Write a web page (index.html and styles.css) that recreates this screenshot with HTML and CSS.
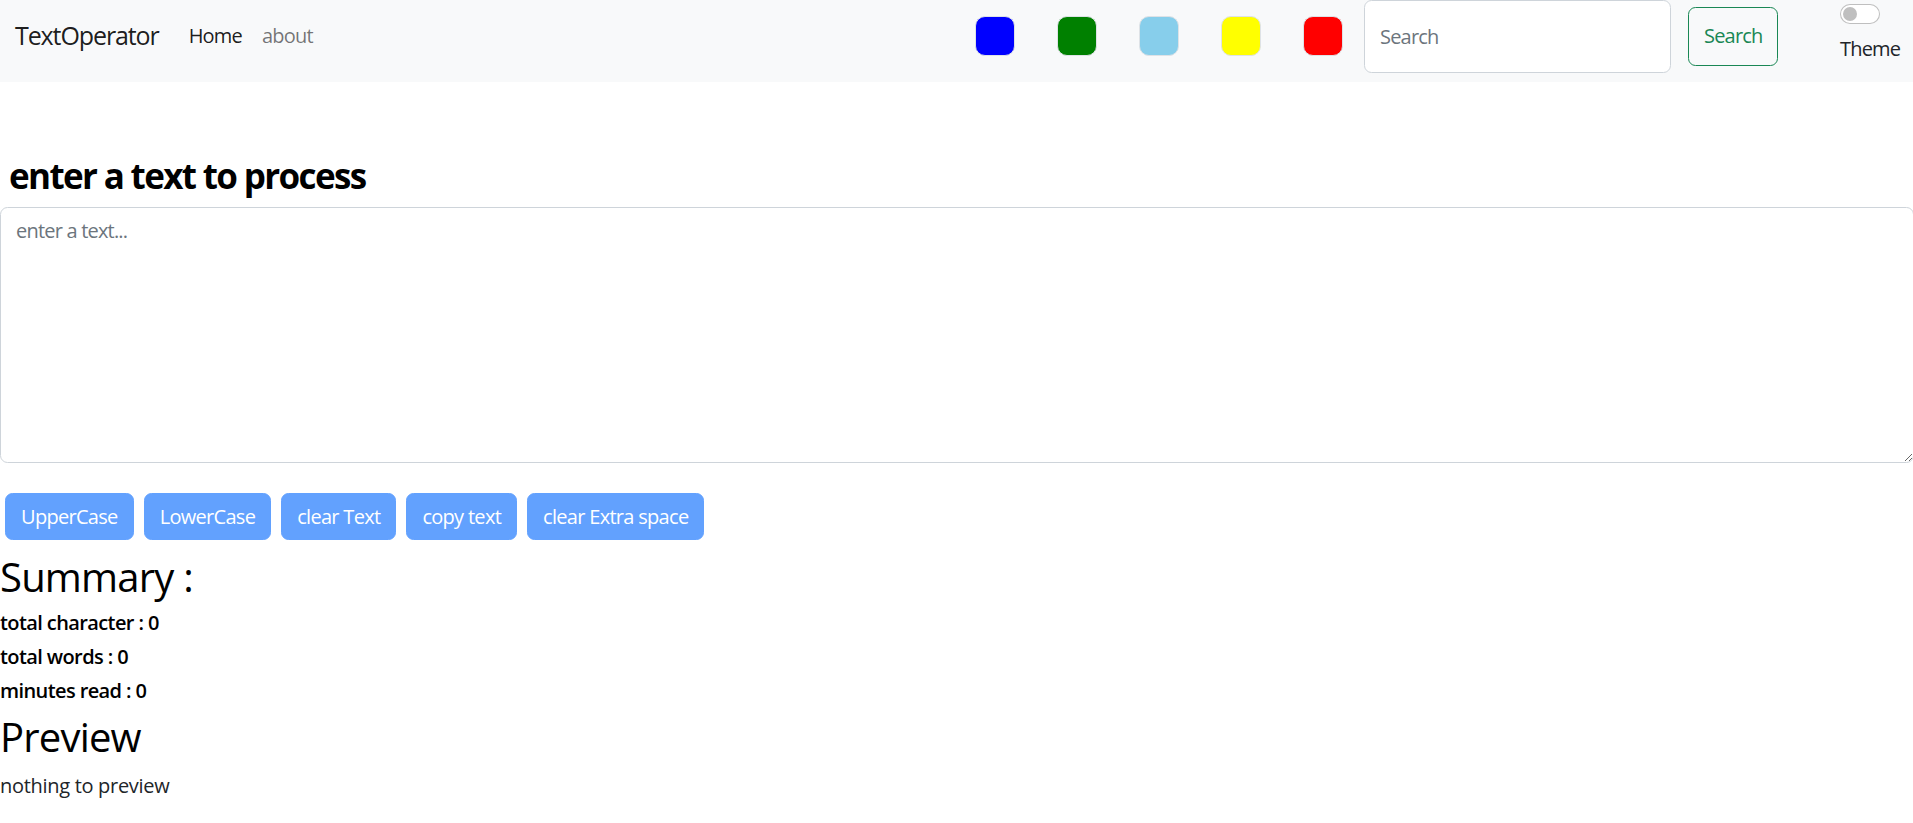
FILE: index.html
```html
<!DOCTYPE html>
<html lang="en">
<head>
<meta charset="utf-8">
<title>TextOperator</title>
<link rel="stylesheet" href="styles.css">
</head>
<body>
<nav class="navbar">
  <a class="brand" href="#">TextOperator</a>
  <ul class="nav-links">
    <li><a class="nav-link active" href="#">Home</a></li>
    <li><a class="nav-link muted" href="#">about</a></li>
  </ul>
  <div class="nav-right">
    <div class="swatches">
      <span class="swatch swatch-blue"></span>
      <span class="swatch swatch-green"></span>
      <span class="swatch swatch-sky"></span>
      <span class="swatch swatch-yellow"></span>
      <span class="swatch swatch-red"></span>
    </div>
    <form class="search">
      <input class="search-input" type="search" placeholder="Search">
      <button class="search-btn" type="button">Search</button>
    </form>
    <div class="theme-switch">
      <span class="switch"><span class="knob"></span></span>
      <label class="switch-label">Theme</label>
    </div>
  </div>
</nav>
<main class="content">
  <h3 class="title">enter a text to process</h3>
  <textarea class="text-input" placeholder="enter a text..."></textarea>
  <div class="actions">
    <button class="btn" type="button">UpperCase</button>
    <button class="btn" type="button">LowerCase</button>
    <button class="btn" type="button">clear Text</button>
    <button class="btn" type="button">copy text</button>
    <button class="btn" type="button">clear Extra space</button>
  </div>
  <h2 class="section-title">Summary :</h2>
  <h6 class="stat">total character : 0</h6>
  <h6 class="stat">total words : 0</h6>
  <h6 class="stat">minutes read : 0</h6>
  <h2 class="section-title">Preview</h2>
  <p class="preview">nothing to preview</p>
</main>
</body>
</html>
```

FILE: styles.css
```css
html { font-size: 20px; }
body {
  margin: 0;
  font-family: "Open Sans", "Noto Sans", sans-serif;
  font-size: 20px;
  line-height: 1.5;
  color: #212529;
  background: #fff;
  overflow: hidden;
}

/* navbar */
.navbar {
  box-sizing: border-box;
  height: 82px;
  background: #f8f9fa;
  display: flex;
  align-items: center;
  padding: 0 14px 10px 15px;
}
.brand {
  font-size: 25px;
  line-height: 1.5;
  letter-spacing: -0.044em;
  color: rgba(0,0,0,.9);
  text-decoration: none;
  margin-right: 20px;
}
.nav-links {
  list-style: none;
  display: flex;
  margin: 0;
  padding: 0;
}
.nav-link {
  display: block;
  padding: 10px 10px;
  letter-spacing: -0.04em;
  text-decoration: none;
  color: rgba(0,0,0,.55);
}
.nav-link.active { color: rgba(0,0,0,.9); }
.nav-right {
  margin-left: auto;
  display: flex;
  align-items: center;
}
.swatches {
  display: flex;
  gap: 42px;
  margin-right: 21px;
}
.swatch {
  box-sizing: border-box;
  width: 40px;
  height: 40px;
  border-radius: 10px;
  border: 1px solid #dee2e6;
}
.swatch-blue { background: #0000ff; }
.swatch-green { background: #008000; }
.swatch-sky { background: #87ceeb; }
.swatch-yellow { background: #ffff00; }
.swatch-red { background: #ff0000; }

.search {
  display: flex;
  align-items: center;
  gap: 17px;
  margin: 0;
}
.search-input {
  box-sizing: border-box;
  width: 307px;
  height: 73px;
  padding: 7.5px 15px;
  font: inherit;
  letter-spacing: -0.04em;
  color: #212529;
  background: #fff;
  border: 1px solid #ced4da;
  border-radius: 7.5px;
  outline: none;
}
.search-input::placeholder { color: #6c757d; }
.search-btn {
  box-sizing: border-box;
  width: 90px;
  height: 59px;
  padding: 7.5px 15px;
  font: inherit;
  letter-spacing: -0.04em;
  color: #198754;
  background: transparent;
  border: 1px solid #198754;
  border-radius: 7.5px;
}
.theme-switch {
  align-self: flex-start;
  display: flex;
  flex-direction: column;
  margin-left: 62px;
  width: 59px;
}
.switch {
  box-sizing: border-box;
  display: flex;
  align-items: center;
  width: 40px;
  height: 20px;
  margin-top: 4px;
  padding-left: 2px;
  border: 1px solid rgba(0,0,0,.25);
  border-radius: 10px;
  background: #fff;
}
.knob {
  width: 14px;
  height: 14px;
  border-radius: 50%;
  background: #bfbfbf;
}
.switch-label {
  margin-top: 10px;
  letter-spacing: -0.04em;
  color: #212529;
}

/* content */
.content { padding: 0; }
.title {
  margin: 73px 0 10px;
  padding-left: 9px;
  font-size: 35px;
  line-height: 1.2;
  font-weight: 700;
  letter-spacing: -0.047em;
  color: #000;
}
.text-input {
  box-sizing: border-box;
  display: block;
  width: calc(100% + 1px);
  height: 256px;
  margin: 0;
  padding: 7.5px 15px;
  font: inherit;
  letter-spacing: -0.04em;
  color: #212529;
  background: #fff;
  border: 1px solid #ced4da;
  border-radius: 7.5px;
  outline: none;
}
.text-input::placeholder { color: #6c757d; }
.actions {
  display: flex;
  gap: 10px;
  padding-left: 5px;
  margin: 30px 0 13px;
}
.btn {
  padding: 7.5px 15px;
  font: inherit;
  letter-spacing: -0.035em;
  color: #fff;
  background: #62a1fe;
  border: 1px solid #62a1fe;
  border-radius: 7.5px;
}
.section-title {
  margin: 0 0 10px;
  font-size: 40px;
  line-height: 1.2;
  font-weight: 500;
  letter-spacing: -0.02em;
  color: #000;
}
.stat {
  margin: 0 0 10px;
  font-size: 20px;
  line-height: 1.2;
  font-weight: 600;
  letter-spacing: -0.03em;
  color: #000;
}
.preview {
  margin: 0 0 20px;
  letter-spacing: -0.015em;
  color: #212529;
}
```
